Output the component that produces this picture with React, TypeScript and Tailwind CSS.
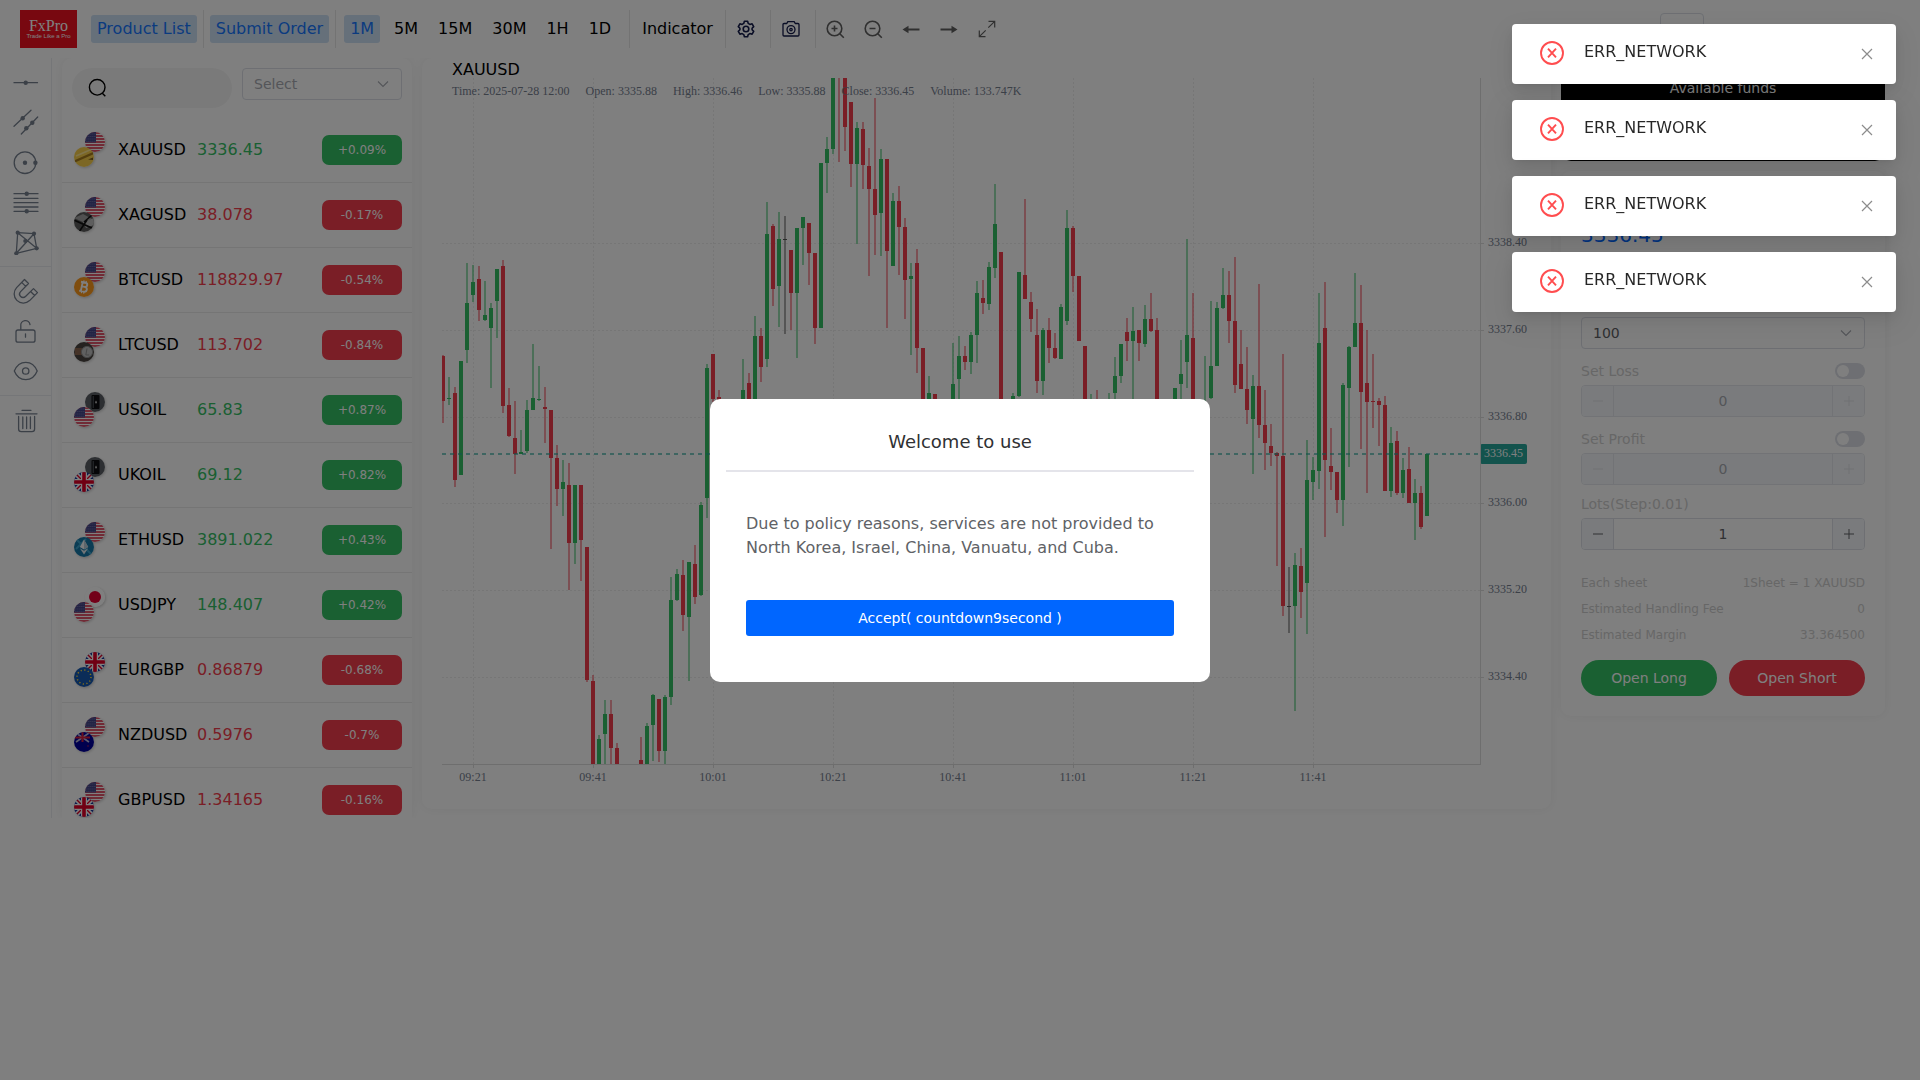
import React from "react";

type Candle = [i: number, dir: "g" | "r" | "n", top: number, bottom: number, high: number, low: number];

/* Slot number, direction, body top, body bottom, wick top, wick bottom. */
const CANDLES: Candle[] = [
  [0, "r", 356, 401, 355, 423], [1, "g", 398, 399, 377, 405], [2, "r", 393, 480, 387, 487], [3, "g", 361, 475, 361, 475],
  [4, "g", 303, 350, 263, 363], [5, "g", 282, 295, 265, 302], [6, "r", 279, 310, 266, 321], [7, "g", 315, 320, 281, 321],
  [8, "g", 308, 328, 303, 388], [9, "g", 269, 301, 269, 338], [10, "r", 266, 406, 260, 413], [11, "r", 405, 436, 388, 437],
  [12, "r", 438, 454, 401, 474], [13, "g", 452, 454, 430, 454], [14, "g", 410, 451, 400, 453], [15, "g", 398, 410, 344, 410],
  [16, "g", 399, 400, 366, 401], [17, "r", 407, 409, 387, 443], [18, "r", 410, 458, 410, 549], [19, "r", 458, 489, 445, 506],
  [20, "g", 482, 489, 460, 516], [21, "r", 485, 543, 463, 590], [22, "g", 485, 543, 485, 564], [23, "r", 485, 540, 485, 581],
  [24, "r", 547, 680, 547, 682], [25, "r", 681, 764, 675, 764], [26, "g", 739, 764, 735, 764], [27, "g", 714, 734, 700, 764],
  [28, "r", 714, 748, 700, 764], [29, "r", 748, 764, 743, 764], [33, "r", 760, 764, 737, 764], [34, "g", 726, 764, 723, 764],
  [35, "g", 695, 725, 694, 761], [36, "r", 699, 751, 699, 762], [37, "g", 697, 751, 695, 764], [38, "g", 600, 697, 577, 705],
  [39, "g", 574, 600, 569, 601], [40, "r", 575, 615, 560, 631], [41, "g", 562, 617, 562, 681], [42, "r", 564, 597, 545, 604],
  [43, "g", 505, 595, 502, 596], [44, "g", 368, 498, 364, 518], [45, "r", 354, 399, 354, 402], [46, "r", 397, 402, 390, 404],
  [50, "g", 390, 410, 359, 412], [51, "r", 383, 404, 373, 410], [52, "g", 336, 404, 316, 410], [53, "r", 336, 367, 328, 382],
  [54, "g", 234, 359, 202, 367], [55, "r", 226, 289, 224, 306], [56, "g", 239, 286, 212, 327], [57, "n", 239, 240, 216, 334],
  [58, "r", 250, 293, 250, 330], [59, "g", 228, 293, 228, 358], [60, "g", 217, 228, 217, 265], [61, "r", 223, 253, 223, 285],
  [62, "r", 253, 328, 253, 344], [63, "g", 163, 328, 163, 328], [64, "g", 149, 163, 137, 193], [65, "g", 70, 149, 70, 154],
  [66, "r", 60, 70, 60, 162], [67, "r", 70, 127, 70, 151], [68, "r", 102, 164, 102, 187], [69, "g", 128, 164, 122, 244],
  [70, "r", 129, 165, 122, 189], [71, "r", 166, 189, 148, 276], [72, "r", 189, 215, 98, 255], [73, "g", 159, 213, 149, 256],
  [74, "r", 159, 251, 159, 328], [75, "g", 201, 266, 193, 266], [76, "r", 201, 227, 186, 275], [77, "r", 227, 280, 218, 319],
  [78, "g", 276, 279, 263, 355], [79, "r", 263, 348, 249, 373], [80, "r", 348, 410, 348, 410], [81, "g", 393, 410, 376, 410],
  [82, "r", 394, 410, 394, 410], [85, "g", 384, 410, 343, 410], [86, "g", 356, 379, 336, 410], [87, "r", 356, 362, 346, 370],
  [88, "g", 335, 362, 332, 374], [89, "g", 293, 335, 281, 363], [90, "r", 298, 303, 280, 314], [91, "g", 267, 304, 262, 310],
  [92, "g", 224, 268, 184, 278], [93, "r", 252, 410, 252, 410], [95, "g", 396, 410, 393, 410], [96, "g", 272, 396, 272, 397],
  [97, "r", 275, 299, 199, 299], [98, "r", 302, 319, 292, 332], [99, "r", 335, 381, 309, 393], [100, "g", 330, 381, 328, 395],
  [101, "r", 330, 348, 318, 363], [102, "r", 348, 358, 333, 359], [103, "g", 307, 359, 304, 359], [104, "g", 228, 321, 210, 325],
  [105, "r", 228, 276, 226, 292], [106, "r", 276, 341, 276, 341], [107, "r", 346, 410, 346, 410], [108, "g", 405, 410, 394, 410],
  [109, "r", 405, 410, 390, 410], [111, "g", 405, 410, 393, 410], [112, "g", 376, 393, 357, 400], [113, "g", 344, 376, 344, 383],
  [114, "r", 332, 341, 318, 361], [115, "g", 331, 341, 307, 410], [116, "r", 330, 343, 330, 361], [117, "g", 319, 344, 305, 347],
  [118, "r", 319, 331, 293, 332], [119, "r", 330, 410, 318, 410], [122, "g", 388, 410, 388, 410], [123, "g", 374, 384, 340, 410],
  [124, "g", 335, 362, 239, 388], [125, "r", 338, 410, 293, 410], [127, "g", 405, 410, 356, 410], [128, "g", 366, 398, 301, 399],
  [129, "g", 308, 366, 302, 366], [130, "g", 295, 308, 268, 309], [131, "r", 295, 321, 271, 343], [132, "r", 321, 385, 257, 393],
  [133, "r", 364, 389, 330, 389], [134, "r", 389, 410, 347, 424], [135, "g", 386, 419, 375, 474], [136, "r", 386, 425, 284, 438],
  [137, "r", 425, 443, 390, 470], [138, "r", 446, 453, 424, 466], [139, "r", 453, 456, 452, 566], [140, "r", 456, 606, 354, 616],
  [141, "n", 606, 607, 567, 633], [142, "g", 565, 606, 553, 711], [143, "r", 566, 592, 548, 618], [144, "g", 480, 583, 440, 634],
  [145, "g", 470, 482, 457, 500], [146, "g", 343, 471, 293, 489], [147, "r", 328, 460, 282, 537], [148, "r", 466, 472, 428, 490],
  [149, "r", 472, 500, 472, 513], [150, "g", 385, 500, 383, 526], [151, "g", 347, 388, 346, 467], [152, "g", 323, 347, 273, 347],
  [153, "r", 323, 392, 285, 449], [154, "r", 383, 402, 330, 493], [155, "r", 401, 402, 354, 428], [156, "r", 401, 405, 398, 446],
  [157, "r", 405, 491, 396, 491], [158, "g", 443, 491, 427, 497], [159, "r", 441, 493, 431, 495], [160, "g", 470, 493, 458, 498],
  [161, "r", 469, 503, 447, 503], [162, "g", 493, 503, 479, 540], [163, "r", 493, 527, 486, 529], [164, "g", 454, 516, 454, 516],
];

const PLOT_TOP = 78;
const COLORS = { g: "#34c064", r: "#f43d4d", n: "#888888" };
const GRID_ROWS = [165, 252, 339, 425, 512, 599];
const GRID_COLS = [31, 151, 271, 391, 511, 631, 751, 871];
const PRICE_LABELS = ["3338.40", "3337.60", "3336.80", "3336.00", "3335.20", "3334.40"];
const TIME_LABELS = ["09:21", "09:41", "10:01", "10:21", "10:41", "11:01", "11:21", "11:41"];

function Plot() {
  return (
    <svg className="block h-[686px] w-full" shapeRendering="crispEdges" role="img" aria-label="XAUUSD one minute candles">
      {GRID_ROWS.map((y) => (
        <line key={y} x1="0" x2="100%" y1={y} y2={y} stroke="#ededed" strokeDasharray="2 2" />
      ))}
      {GRID_COLS.map((x) => (
        <line key={x} x1={x} x2={x} y1="0" y2="100%" stroke="#ededed" strokeDasharray="2 2" />
      ))}
      {CANDLES.map(([i, dir, top, bottom, high, low]) => {
        const x = 1 + i * 6;
        return (
          <g key={i} fill={COLORS[dir]}>
            <rect x={x - 1} y={high - PLOT_TOP} width="2" height={low - high} opacity={dir === "n" ? 0.7 : 0.5} />
            <rect x={x - 2} y={top - PLOT_TOP} width="4" height={bottom - top} fill={dir === "n" ? "#555555" : undefined} />
          </g>
        );
      })}
      <line x1="0" x2="100%" y1="376" y2="376" stroke="#26a69a" strokeOpacity="0.6" strokeWidth="2" strokeDasharray="4 4" />
    </svg>
  );
}

function Chart() {
  return (
    <section className="flex h-[751px] min-w-0 flex-1 flex-col rounded-[10px] bg-white pr-5 pl-5 shadow-[0_0_12px_rgba(0,0,0,0.06)]">
      <h1 className="h-5 pl-2.5 text-base leading-6 text-black">XAUUSD</h1>
      <div className="flex">
        <div className="relative min-w-0 flex-1 border-r border-b border-[#dddddd]">
          <Plot />
          <p className="absolute top-[6px] left-2.5 flex gap-4 font-[Liberation_Serif,serif] text-xs leading-[14px] whitespace-nowrap text-[#76808f]">
            <span>Time: 2025-07-28 12:00</span>
            <span>Open: 3335.88</span>
            <span>High: 3336.46</span>
            <span>Low: 3335.88</span>
            <span>Close: 3336.45</span>
            <span>Volume: 133.747K</span>
          </p>
        </div>
        <svg className="block h-[687px] w-[50px] overflow-visible font-[Liberation_Serif,serif] text-xs">
          {GRID_ROWS.map((y, i) => (
            <g key={y}>
              <line x1="0" x2="3" y1={y} y2={y} stroke="#dddddd" shapeRendering="crispEdges" />
              <text x="7" y={y + 3} fill="#76808f">{PRICE_LABELS[i]}</text>
            </g>
          ))}
          <rect x="-1" y="366" width="47" height="20" rx="2" fill="#26a69a" />
          <text x="3" y="379" fill="#ffffff">3336.45</text>
        </svg>
      </div>
      <svg className="block h-6 w-full overflow-visible font-[Liberation_Serif,serif] text-xs">
        {GRID_COLS.map((x, i) => (
          <g key={x}>
            <line x1={x} x2={x} y1="0" y2="3" stroke="#dddddd" shapeRendering="crispEdges" />
            <text x={x} y="16" textAnchor="middle" fill="#76808f">{TIME_LABELS[i]}</text>
          </g>
        ))}
      </svg>
    </section>
  );
}

/* ---------- coin and flag pictures ---------- */

type Pic = "us" | "uk" | "jp" | "eu" | "nz" | "gold" | "silver" | "btc" | "ltc" | "oil" | "eth";

function UnionJack() {
  return (
    <>
      <rect width="20" height="20" fill="#1b3a9c" />
      <path d="M0 0L20 20M20 0L0 20" stroke="#fff" strokeWidth="4.5" />
      <path d="M0 0L20 20M20 0L0 20" stroke="#e00027" strokeWidth="1.4" />
      <path d="M10 0V20M0 10H20" stroke="#fff" strokeWidth="6" />
      <path d="M10 0V20M0 10H20" stroke="#e00027" strokeWidth="3.6" />
    </>
  );
}

const ART: Record<Pic, React.ReactNode> = {
  us: (
    <>
      <rect width="20" height="20" fill="#ffffff" />
      <path d="M0 1H20M0 4H20M0 7H20M0 10H20M0 13H20M0 16H20M0 19H20" stroke="#d8203c" strokeWidth="1.4" />
      <rect width="11" height="10.5" fill="#444488" />
      <path d="M1.5 2H11M1.5 4.5H11M1.5 7H11M1.5 9.3H11" stroke="#9a9ac0" strokeWidth="0.8" strokeDasharray="0.8 1.2" />
    </>
  ),
  uk: <UnionJack />,
  jp: (
    <>
      <rect width="20" height="20" fill="#ffffff" />
      <circle cx="10" cy="10" r="6" fill="#e60033" />
    </>
  ),
  eu: (
    <>
      <rect width="20" height="20" fill="#1759b0" />
      <circle cx="10" cy="10" r="7" fill="none" stroke="#ffd83a" strokeWidth="1.5" strokeDasharray="1.2 2.47" />
    </>
  ),
  nz: (
    <>
      <rect width="20" height="20" fill="#00009c" />
      <path d="M2 1L15 10M15 1L2 10" stroke="#b9b9dd" strokeWidth="1.6" />
      <path d="M8.5 0V10M0 5.5H16" stroke="#d8203c" strokeWidth="2" />
      <circle cx="14" cy="14" r="0.7" fill="#d8203c" />
    </>
  ),
  gold: (
    <>
      <rect width="20" height="20" fill="#f9cf4a" />
      <path d="M1 13L19 5V7.5L1 15.5Z" fill="#a87d1c" />
      <path d="M2 9L17 2.5" stroke="#ffe795" strokeWidth="1.6" />
      <path d="M14 12.5L19 10.5V13Z" fill="#7f5c14" />
    </>
  ),
  silver: (
    <>
      <rect width="20" height="20" fill="#5a5a5a" />
      <path d="M0 6L9 2L18 7L9 10Z" fill="#a0a0a0" />
      <path d="M9 10L20 6V13L12 16Z" fill="#bdbdbd" />
      <path d="M0 8L20 17M5 20L13 8M10 10L18 3" stroke="#111" strokeWidth="1.6" />
    </>
  ),
  btc: (
    <>
      <rect width="20" height="20" fill="#ff9a1c" />
      <g fill="none" stroke="#fff" strokeWidth="1.9" transform="rotate(12 10 10)">
        <path d="M7.7 5.5V14.5M6 5.5H10.6A2.1 2.1 0 0 1 10.6 9.8H7.7M10.6 9.8H11A2.3 2.3 0 0 1 11 14.5H6" />
        <path d="M8.7 3.4V5.5M11 3.4V5.5M8.7 14.5V16.6M11 14.5V16.6" strokeWidth="1.2" />
      </g>
    </>
  ),
  ltc: (
    <>
      <rect width="20" height="20" fill="#4a4540" />
      <path d="M1 6H8V13H1Z" fill="#8a6650" />
      <circle cx="13" cy="10" r="5.6" fill="#c0c0c0" stroke="#8f8f8f" />
      <path d="M13 6.5L11.8 13H15.2" fill="none" stroke="#8f8f8f" strokeWidth="1" />
    </>
  ),
  oil: (
    <>
      <rect width="20" height="20" fill="#5b5f64" />
      <rect x="6.5" y="3" width="8" height="14" rx="1" fill="#0c0d10" />
      <path d="M8.2 4V16" stroke="#5e656c" strokeWidth="0.9" />
      <path d="M11 8.5C12.5 10.5 12 11.5 11 11.5S9.6 10.4 11 8.5Z" fill="#c0c0c0" />
    </>
  ),
  eth: (
    <>
      <rect width="20" height="20" fill="#1679a8" />
      <path d="M3 3L17 17M2 12L12 2" stroke="#3ca3cc" strokeWidth="2" />
      <path d="M10 2.5L14.2 10L10 12.5L5.8 10Z" fill="#f5f8fa" />
      <path d="M5.8 11.3L10 13.8L14.2 11.3L10 17.5Z" fill="#dfe9ee" />
      <path d="M10 2.5V12.5L14.2 10Z" fill="#b9cdd8" />
    </>
  ),
};

function Round({ pic }: { pic: Pic }) {
  return (
    <svg viewBox="0 0 20 20" className="block h-5 w-5 rounded-full shadow-[1px_1px_3px_rgba(0,0,0,0.2)]" aria-hidden="true">
      {ART[pic]}
    </svg>
  );
}

interface Product {
  name: string;
  price: string;
  change: string;
  up: boolean;
  back: Pic;
  front: Pic;
}

const PRODUCTS: Product[] = [
  { name: "XAUUSD", price: "3336.45", change: "+0.09%", up: true, back: "us", front: "gold" },
  { name: "XAGUSD", price: "38.078", change: "-0.17%", up: false, back: "us", front: "silver" },
  { name: "BTCUSD", price: "118829.97", change: "-0.54%", up: false, back: "us", front: "btc" },
  { name: "LTCUSD", price: "113.702", change: "-0.84%", up: false, back: "us", front: "ltc" },
  { name: "USOIL", price: "65.83", change: "+0.87%", up: true, back: "oil", front: "us" },
  { name: "UKOIL", price: "69.12", change: "+0.82%", up: true, back: "oil", front: "uk" },
  { name: "ETHUSD", price: "3891.022", change: "+0.43%", up: true, back: "us", front: "eth" },
  { name: "USDJPY", price: "148.407", change: "+0.42%", up: true, back: "jp", front: "us" },
  { name: "EURGBP", price: "0.86879", change: "-0.68%", up: false, back: "uk", front: "eu" },
  { name: "NZDUSD", price: "0.5976", change: "-0.7%", up: false, back: "us", front: "nz" },
  { name: "GBPUSD", price: "1.34165", change: "-0.16%", up: false, back: "us", front: "uk" },
];

function Chevron() {
  return (
    <svg viewBox="0 0 14 14" className="pointer-events-none absolute top-[9px] right-3 h-3.5 w-3.5" fill="none" stroke="#a8abb2" strokeWidth="1.1" aria-hidden="true">
      <path d="M2 4.5L7 9.5L12 4.5" />
    </svg>
  );
}

function ProductList() {
  return (
    <section className="flex w-[350px] shrink-0 flex-col rounded-t-[10px] bg-white shadow-[0_0_12px_rgba(0,0,0,0.06)]">
      <div className="grid grid-cols-2 items-start gap-2.5 px-2.5 py-2.5">
        <label className="flex h-10 items-center rounded-full bg-[#f5f5f5] pl-4">
          <svg viewBox="0 0 20 20" className="h-5 w-5 shrink-0" fill="none" stroke="#000" strokeWidth="1.4" aria-hidden="true">
            <circle cx="9.2" cy="9.3" r="7.8" />
            <path d="M14.3 15.2L17.3 18.2" />
          </svg>
          <input type="text" aria-label="Search products" className="w-full min-w-0 bg-transparent px-2 text-sm outline-none" />
        </label>
        <div className="relative">
          <select aria-label="Category" className="h-8 w-full appearance-none rounded border border-[#dcdfe6] bg-white pl-[11px] text-sm text-[#a8abb2]">
            <option>Select</option>
          </select>
          <Chevron />
        </div>
      </div>
      <ul>
        {PRODUCTS.map((p) => (
          <li key={p.name} className="flex h-[65px] items-center border-b border-[#eaeaea] pr-2.5 pl-3">
            <div className="relative h-9 w-11">
              <div className="absolute top-0 left-[11px]"><Round pic={p.back} /></div>
              <div className="absolute top-[15px] left-0"><Round pic={p.front} /></div>
            </div>
            <span className="w-[79px] text-base text-black">{p.name}</span>
            <span className={p.up ? "flex-1 text-base text-[#34c064]" : "flex-1 text-base text-[#f43d4d]"}>{p.price}</span>
            <span className={p.up ? "h-[30px] w-20 rounded-[7px] bg-[#34c064] text-center text-xs leading-[30px] text-white" : "h-[30px] w-20 rounded-[7px] bg-[#f43d4d] text-center text-xs leading-[30px] text-white"}>
              {p.change}
            </span>
          </li>
        ))}
      </ul>
    </section>
  );
}

/* ---------- drawing tools ---------- */

const DOT = { fill: "#76808f", stroke: "none" };

const TOOLS: { label: string; divider?: boolean; art: React.ReactNode }[] = [
  { label: "Straight line", art: <><path d="M1 13.7H24.5" /><circle cx="12.7" cy="13.7" r="2.2" {...DOT} /></> },
  {
    label: "Price channel",
    art: (
      <>
        <path d="M1 17.3L18 1.3M8.3 25L24.7 8" />
        <circle cx="9.7" cy="9.3" r="2.2" {...DOT} /><circle cx="19.3" cy="13.7" r="2.2" {...DOT} /><circle cx="13.3" cy="19.3" r="2.2" {...DOT} />
      </>
    ),
  },
  { label: "Circle", art: <><circle cx="12" cy="13.7" r="10.8" /><circle cx="12" cy="13.7" r="2.2" {...DOT} /><circle cx="22.4" cy="13.7" r="2.2" {...DOT} /></> },
  {
    label: "Fibonacci",
    art: <><path d="M1 4.7H25M1 9.3H25M1 13.7H25M1 18H25M1 22.3H25" /><circle cx="13.7" cy="4.7" r="2.2" {...DOT} /><circle cx="13.7" cy="22.3" r="2.2" {...DOT} /></>,
  },
  {
    label: "Pattern",
    art: (
      <>
        <path d="M4.7 3.7L21 4.7L23.7 19.3L3.3 24.3ZM4.7 3.7L23.7 19.3M21 4.7L3.3 24.3" />
        <circle cx="4.7" cy="3.7" r="2.1" {...DOT} /><circle cx="21" cy="4.7" r="2.1" {...DOT} /><circle cx="23.7" cy="19.3" r="2.1" {...DOT} />
        <circle cx="3.3" cy="24.3" r="2.1" {...DOT} /><circle cx="12.3" cy="12" r="2.1" {...DOT} />
      </>
    ),
  },
  {
    label: "Magnet",
    divider: true,
    art: <path d="M11.5 1.5L3.6 9.6A9.2 9.2 0 0 0 16.6 22.6L24.5 14.6L20.5 10.6L12.5 18.5A3.3 3.3 0 0 1 7.6 13.6L15.5 5.5ZM8.7 4.4L12.7 8.4M17.6 13.5L21.6 17.5" />,
  },
  { label: "Lock", art: <path d="M5 12H20A2 2 0 0 1 22 14V22.2A2 2 0 0 1 20 24.2H5A2 2 0 0 1 3 22.2V14A2 2 0 0 1 5 12ZM7.8 12V7.8A4.6 4.6 0 0 1 17 6.6M12.5 15.8V19.2" /> },
  { label: "Visibility", art: <><path d="M1.3 13C6 1.4 19.5 1.4 24.2 13C19.5 24.6 6 24.6 1.3 13Z" /><circle cx="12.7" cy="13" r="3.2" /></> },
  { label: "Delete", divider: true, art: <path d="M9 3.3H18M3 6.8H24M5.6 9.5V22A2.6 2.6 0 0 0 8.2 24.6H19A2.6 2.6 0 0 0 21.6 22V9.5M9.8 10V21.5M13.6 10V21.5M17.4 10V21.5" /> },
];

function ToolBar() {
  return (
    <nav aria-label="Drawing tools" className="flex w-[52px] shrink-0 flex-col items-stretch border-r border-[#ebedf1]">
      {TOOLS.map((t) => (
        <React.Fragment key={t.label}>
          {t.divider && <hr className="mt-2 border-t border-[#ebedf1]" />}
          <button type="button" aria-label={t.label} className="mt-2 flex h-8 items-center justify-center">
            <svg viewBox="0 0 26 26" className="h-[26px] w-[26px]" fill="none" stroke="#76808f" strokeWidth="1.3" strokeLinejoin="round" strokeLinecap="round">
              {t.art}
            </svg>
          </button>
        </React.Fragment>
      ))}
    </nav>
  );
}

/* ---------- header ---------- */

const VIEW_ICONS: { label: string; art: React.ReactNode }[] = [
  { label: "Zoom in", art: <><circle cx="8.5" cy="8.5" r="7.3" /><path d="M13.8 13.8L17.8 17.8M5.5 8.5H11.5M8.5 5.5V11.5" /></> },
  { label: "Zoom out", art: <><circle cx="8.5" cy="8.5" r="7.3" /><path d="M13.8 13.8L17.8 17.8M5.5 8.5H11.5" /></> },
  { label: "Scroll left", art: <><path d="M4 9.5H17.5" strokeWidth="2" /><path d="M0.5 9.5L6.5 5.8V13.2Z" fill="#606060" stroke="none" /></> },
  { label: "Scroll right", art: <><path d="M0.5 9.5H14" strokeWidth="2" /><path d="M17.5 9.5L11.5 5.8V13.2Z" fill="#606060" stroke="none" /></> },
  { label: "Full screen", art: <path d="M10.5 1.3H16.7V7.5M16.7 1.3L10.3 7.7M7.5 16.7H1.3V10.5M1.3 16.7L7.7 10.3" strokeWidth="1.2" /> },
];

function Bar() {
  return <span className="h-[38px] w-px bg-[#e6e6e6]" />;
}

function Header() {
  const active = "h-7 rounded-[3px] bg-[#cce0f5] px-1.5 text-base leading-7 text-[#1677ff]";
  return (
    <header className="flex h-[58px] items-center pr-12 pl-5">
      <a href="#home" className="flex h-[38px] w-[57px] flex-col items-center justify-center bg-[#f01020] text-white">
        <span className="font-[Liberation_Serif,serif] text-base leading-[15px]">FxPro</span>
        <span className="font-[Liberation_Sans,sans-serif] text-[6px] leading-[7px] whitespace-nowrap">Trade Like a Pro</span>
      </a>
      <div className="ml-3.5 flex items-center gap-1.5">
        <button type="button" className={active}>Product List</button>
        <Bar />
        <button type="button" className={active}>Submit Order</button>
        <Bar />
      </div>
      <div className="mr-3 ml-2 flex items-center gap-2">
        <button type="button" className={active}>1M</button>
        {["5M", "15M", "30M", "1H", "1D"].map((t) => (
          <button key={t} type="button" className="h-7 px-1.5 text-base leading-7 text-black">{t}</button>
        ))}
      </div>
      <div className="flex items-center">
        <Bar />
        <button type="button" className="mx-1.5 h-7 px-1.5 text-base leading-7 text-black">Indicator</button>
        <Bar />
        <button type="button" aria-label="Settings" className="flex w-11 justify-center pr-1">
          <svg viewBox="0 0 18 18" className="h-[18px] w-[18px]" fill="none" stroke="#131a4a" strokeWidth="1.6" strokeLinejoin="round">
            <path d="M7.4 1.2H10.6L11.2 3.4L12.9 4.4L15.1 3.8L16.7 6.6L15.1 8.2V9.8L16.7 11.4L15.1 14.2L12.9 13.6L11.2 14.6L10.6 16.8H7.4L6.8 14.6L5.1 13.6L2.9 14.2L1.3 11.4L2.9 9.8V8.2L1.3 6.6L2.9 3.8L5.1 4.4L6.8 3.4Z" />
            <circle cx="9" cy="9" r="2.8" />
          </svg>
        </button>
        <Bar />
        <button type="button" aria-label="Screenshot" className="flex w-11 justify-center pr-1">
          <svg viewBox="0 0 18 18" className="h-[18px] w-[18px]" fill="none" stroke="#131a4a" strokeWidth="1.3" strokeLinejoin="round">
            <path d="M2 3.5H4.8L5.8 1.6H12.2L13.2 3.5H16A1 1 0 0 1 17 4.5V15A1 1 0 0 1 16 16H2A1 1 0 0 1 1 15V4.5A1 1 0 0 1 2 3.5Z" />
            <circle cx="9" cy="9.6" r="4" />
            <circle cx="9" cy="9.6" r="1.2" />
          </svg>
        </button>
        <Bar />
        {VIEW_ICONS.map((v) => (
          <button key={v.label} type="button" aria-label={v.label} className="flex w-[38px] justify-center">
            <svg viewBox="0 0 18 18" className="h-[18px] w-[18px] overflow-visible" fill="none" stroke="#606060" strokeWidth="1.6">
              {v.art}
            </svg>
          </button>
        ))}
      </div>
      <div className="ml-auto flex items-center gap-4 text-base leading-7 text-black">
        <button type="button" aria-label="Language" className="mr-1.5 h-8 w-11 rounded border border-[#dcdfe6]" />
        <a href="#login" className="pt-1">Login</a>
        <span className="pt-1">|</span>
        <a href="#register" className="pt-1">Register</a>
      </div>
    </header>
  );
}

/* ---------- order form ---------- */

function Stepper({ label, value, disabled }: { label: string; value: string; disabled?: boolean }) {
  const side = disabled
    ? "flex w-[31px] shrink-0 items-center justify-center bg-[#f5f7fa] text-[#dfe2e8]"
    : "flex w-[31px] shrink-0 items-center justify-center bg-[#f5f7fa] text-[#606266]";
  return (
    <div className={disabled ? "mt-1.5 flex h-8 overflow-hidden rounded border border-[#e4e7ed]" : "mt-1.5 flex h-8 overflow-hidden rounded border border-[#dcdfe6]"}>
      <button type="button" disabled={disabled} aria-label={`Decrease ${label}`} className={side}>
        <svg viewBox="0 0 12 12" className="h-3 w-3" stroke="currentColor" aria-hidden="true"><path d="M1 6H11" /></svg>
      </button>
      <input
        type="text"
        aria-label={label}
        disabled={disabled}
        defaultValue={value}
        className={
          disabled
            ? "w-full min-w-0 border-x border-[#e4e7ed] bg-[#f5f7fa] text-center text-sm text-[#a8abb2]"
            : "w-full min-w-0 border-x border-[#dcdfe6] bg-white text-center text-sm text-[#606266]"
        }
      />
      <button type="button" disabled={disabled} aria-label={`Increase ${label}`} className={side}>
        <svg viewBox="0 0 12 12" className="h-3 w-3" stroke="currentColor" aria-hidden="true"><path d="M1 6H11M6 1V11" /></svg>
      </button>
    </div>
  );
}

function ToggleRow({ label }: { label: string }) {
  return (
    <label className="mt-3.5 flex h-4 items-center justify-between text-sm leading-4 text-[#cecece]">
      {label}
      <input
        type="checkbox"
        role="switch"
        className="h-4 w-[30px] appearance-none rounded-full bg-[#dcdfe6] before:m-0.5 before:block before:h-3 before:w-3 before:rounded-full before:bg-white"
      />
    </label>
  );
}

const FACTS = [
  ["Each sheet", "1Sheet = 1 XAUUSD"],
  ["Estimated Handling Fee", "0"],
  ["Estimated Margin", "33.364500"],
];

function OrderPanel() {
  return (
    <aside className="flex w-[324px] shrink-0 flex-col gap-2.5">
      <div className="h-[103px] rounded-b-[10px] bg-black pt-5 text-center text-sm leading-5 text-white">Available funds</div>
      <form className="rounded-[10px] bg-white px-5 pt-[50px] pb-5 shadow-[0_0_12px_rgba(0,0,0,0.06)]">
        <p className="text-xl leading-7 text-[#0066ff]">3336.45</p>
        <div className="relative mt-[68px]">
          <select aria-label="Leverage" className="h-8 w-full appearance-none rounded border border-[#dcdfe6] bg-white pl-[11px] text-sm text-[#606266]">
            <option>100</option>
          </select>
          <Chevron />
        </div>
        <ToggleRow label="Set Loss" />
        <Stepper label="Loss" value="0" disabled />
        <ToggleRow label="Set Profit" />
        <Stepper label="Profit" value="0" disabled />
        <p className="mt-3 text-sm leading-[15px] text-[#cecece]">Lots(Step:0.01)</p>
        <Stepper label="Lots" value="1" />
        <dl className="mt-5 text-xs leading-[26px] text-[#cecece]">
          {FACTS.map(([k, v]) => (
            <div key={k} className="flex justify-between">
              <dt>{k}</dt>
              <dd>{v}</dd>
            </div>
          ))}
        </dl>
        <div className="mt-3 flex gap-3">
          <button type="button" className="h-9 flex-1 rounded-full bg-[#34c064] text-sm text-white">Open Long</button>
          <button type="button" className="h-9 flex-1 rounded-full bg-[#f43d4d] text-sm text-white">Open Short</button>
        </div>
      </form>
    </aside>
  );
}

function Toast() {
  return (
    <div role="alert" className="flex h-[60px] w-96 items-start rounded-sm bg-white py-4 pr-[22px] pl-7 shadow-[0_3px_6px_-4px_rgba(0,0,0,0.12),0_6px_16px_rgba(0,0,0,0.08),0_9px_28px_8px_rgba(0,0,0,0.05)]">
      <svg viewBox="0 0 24 24" className="mt-px h-6 w-6" fill="none" stroke="#ff4d4f" strokeWidth="1.9" aria-hidden="true">
        <circle cx="12" cy="12" r="11" />
        <path d="M8 7.6L16 16.4M16 7.6L8 16.4" />
      </svg>
      <span className="ml-5 flex-1 text-base leading-6 text-black/85">ERR_NETWORK</span>
      <button type="button" aria-label="Close" className="mt-[7px]">
        <svg viewBox="0 0 14 14" className="block h-3.5 w-3.5" fill="none" stroke="#8c8c8c" strokeWidth="1.2">
          <path d="M2 2L12 12M12 2L2 12" />
        </svg>
      </button>
    </div>
  );
}

function Welcome() {
  return (
    <div role="dialog" aria-modal="true" aria-labelledby="welcome-title" className="w-[500px] rounded-[10px] bg-white px-4 pt-[29px] pb-[46px]">
      <h2 id="welcome-title" className="border-b-2 border-[#e4e4ea] pb-3.5 text-center text-lg leading-7 text-[#303133]">Welcome to use</h2>
      <div className="px-5 pt-10">
        <p className="text-base leading-6 text-[#606266]">
          Due to policy reasons, services are not provided to North Korea, Israel, China, Vanuatu, and Cuba.
        </p>
        <button type="button" className="mt-10 h-9 w-full rounded-[3px] bg-[#0066ff] text-sm text-white">Accept( countdown9second )</button>
      </div>
    </div>
  );
}

export default function App() {
  return (
    <div className="min-h-screen bg-white font-[DejaVu_Sans,sans-serif]">
      <Header />
      <main className="flex h-[760px] overflow-hidden">
        <ToolBar />
        <div className="flex min-w-0 flex-1 gap-2.5 pr-[35px] pl-2.5">
          <ProductList />
          <Chart />
          <OrderPanel />
        </div>
      </main>
      <div className="fixed inset-0 flex items-center justify-center bg-black/50">
        <Welcome />
      </div>
      <div className="fixed top-6 right-6 flex flex-col gap-4">
        <Toast />
        <Toast />
        <Toast />
        <Toast />
      </div>
    </div>
  );
}
